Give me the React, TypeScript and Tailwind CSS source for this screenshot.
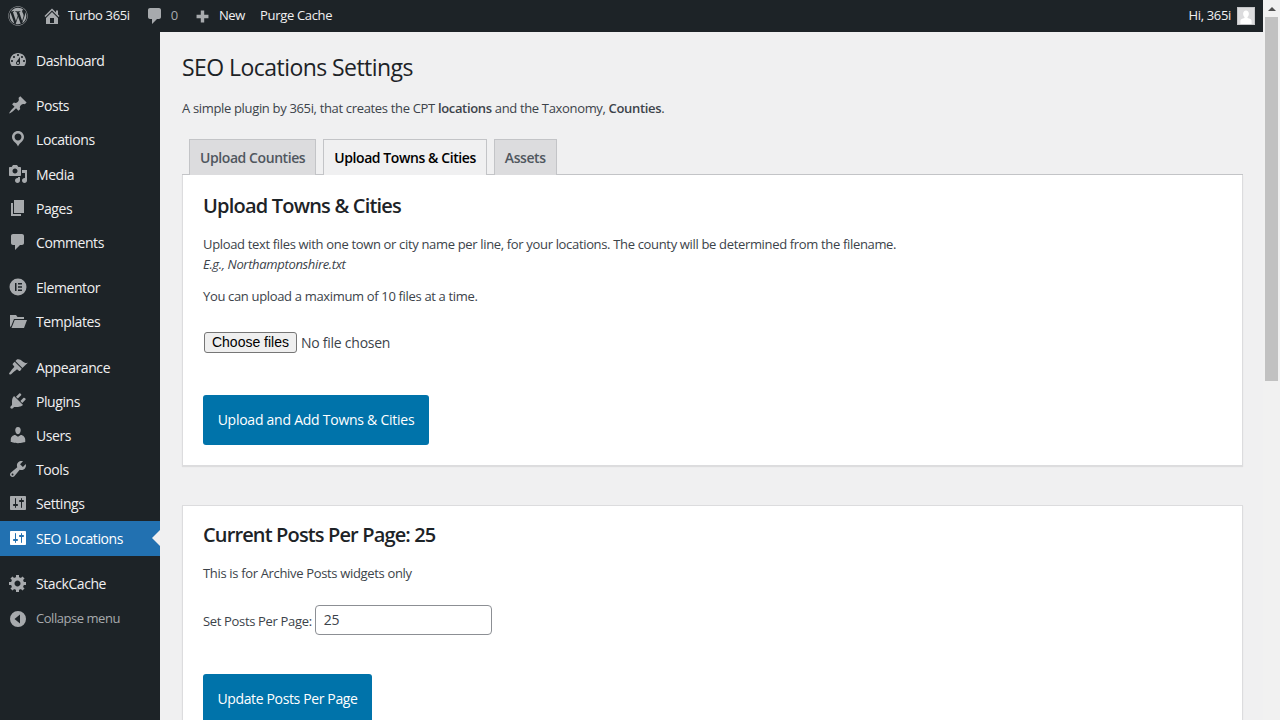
import React from "react";
import { FaWordpress } from "react-icons/fa";

const P: Record<string, string> = {
  home: "M16 8.5l1.53 1.53-1.06 1.06L10 4.62l-6.47 6.47-1.06-1.06L10 2.5l4 4v-2h2v4zm-6-2.46l6 5.99V18H4v-5.97zM12 17v-5H8v5h4z",
  comment: "M5 2h9c1.1 0 2 .9 2 2v7c0 1.1-.9 2-2 2h-2l-5 5v-5H5c-1.1 0-2-.9-2-2V4c0-1.1.9-2 2-2z",
  plus: "M17 8v4h-5v5H8v-5H3V8h5V3h4v5h5z",
  dashboard: "M3.76 16h12.48c1.1-1.37 1.76-3.11 1.76-5 0-4.42-3.58-8-8-8s-8 3.58-8 8c0 1.89.66 3.63 1.76 5zM10 4c.55 0 1 .45 1 1s-.45 1-1 1-1-.45-1-1 .45-1 1-1zM6 6c.55 0 1 .45 1 1s-.45 1-1 1-1-.45-1-1 .45-1 1-1zm8 0c.55 0 1 .45 1 1s-.45 1-1 1-1-.45-1-1 .45-1 1-1zm-5.37 5.55L12 7v6c0 1.1-.9 2-2 2s-2-.9-2-2c0-.57.24-1.08.63-1.45zM4 10c.55 0 1 .45 1 1s-.45 1-1 1-1-.45-1-1 .45-1 1-1zm12 0c.55 0 1 .45 1 1s-.45 1-1 1-1-.45-1-1 .45-1 1-1zm-5 3c0-.55-.45-1-1-1s-1 .45-1 1 .45 1 1 1 1-.45 1-1z",
  pin: "M10.44 3.02l1.82-1.82 6.36 6.35-1.83 1.82c-1.05-.68-2.48-.57-3.41.36l-.75.75c-.92.93-1.04 2.35-.35 3.41l-1.83 1.82-2.41-2.41-2.8 2.79c-.42.42-3.38 2.71-3.8 2.29s1.86-3.39 2.28-3.81l2.79-2.79L4.1 9.36l1.83-1.82c1.05.69 2.48.57 3.41-.36l.75-.75c.93-.92 1.05-2.35.35-3.41z",
  location: "M10 2C6.69 2 4 4.69 4 8c0 2.02 1.17 3.71 2.53 4.89.43.37 1.18.96 1.85 1.83.74.97 1.41 2.01 1.62 2.71.21-.7.88-1.74 1.62-2.71.67-.87 1.42-1.46 1.85-1.83C14.83 11.71 16 10.02 16 8c0-3.31-2.69-6-6-6zm0 2.56c1.9 0 3.44 1.54 3.44 3.44S11.9 11.44 10 11.44 6.56 9.9 6.56 8 8.1 4.56 10 4.56z",
  media: "M13 11V4c0-.55-.45-1-1-1h-1.67L9 1H5L3.67 3H2c-.55 0-1 .45-1 1v7c0 .55.45 1 1 1h10c.55 0 1-.45 1-1zM7 4.5c1.38 0 2.5 1.12 2.5 2.5S8.38 9.5 7 9.5 4.5 8.38 4.5 7 5.62 4.5 7 4.5zM14 6h5v10.5c0 1.38-1.12 2.5-2.5 2.5S14 17.88 14 16.5s1.12-2.5 2.5-2.5c.17 0 .34.02.5.05V9h-3V6zm-4 8.05V13h2v3.5c0 1.38-1.12 2.5-2.5 2.5S7 17.88 7 16.5 8.12 14 9.5 14c.17 0 .34.02.5.05z",
  pages: "M6 15V2h10v13H6zm-1 1h8v2H3V5h2v11z",
  elementor: "M10 1.5a8.5 8.5 0 1 0 0 17 8.5 8.5 0 0 0 0-17zM7 6h1.5v8H7V6zm3 0h4v1.5h-4V6zm0 3.25h4v1.5h-4v-1.5zM10 12.5h4V14h-4v-1.5z",
  folder: "M2 16V4h6l1.5 2H16v2H6L3.2 15 2 16zm1.5 1L6.7 9H19l-3 8H3.5z",
  brush: "M14.48 11.06L7.41 3.99l1.5-1.5c.5-.56 2.3-.47 3.51.32 1.21.8 1.43 1.28 2.91 2.1 1.18.64 2.45 1.26 4.45.85zm-.71.71L6.7 4.7 4.93 6.47c-.39.39-.39 1.02 0 1.41l1.06 1.06c.39.39.39 1.03 0 1.42-.6.6-2.5 3-3.5 4.1-.8.9-1.5 1.5-1.39 2.34.05.4.4.75.8.8.84.11 1.44-.59 2.34-1.39 1.1-1 3.5-2.9 4.1-3.5.39-.39 1.03-.39 1.42 0l1.06 1.06c.39.39 1.02.39 1.41 0z",
  plug: "M13.11 4.36L9.87 7.6 8 5.73l3.24-3.24c.35-.34 1.05-.2 1.56.32.52.51.66 1.21.31 1.55zm-8 1.77l.91-1.12 9.01 9.01-1.19.84c-.71.71-2.63 1.16-3.82 1.16H6.14L4.9 17.26c-.59.59-1.54.59-2.12 0-.59-.58-.59-1.53 0-2.12l1.24-1.24v-3.88c0-1.13.4-3.19 1.09-3.89zm7.26 3.97l3.24-3.24c.34-.35 1.04-.21 1.55.31.52.51.66 1.21.31 1.55l-3.24 3.25z",
  users: "M10 9.25c-2.27 0-2.73-3.44-2.73-3.44C7 4.02 7.82 2 9.97 2c2.16 0 2.98 2.02 2.71 3.81 0 0-.41 3.44-2.68 3.44zm0 2.57L12.72 10c2.39 0 4.52 2.33 4.52 4.53v2.49s-3.65 1.13-7.24 1.13c-3.65 0-7.24-1.13-7.24-1.13v-2.49c0-2.25 1.94-4.48 4.47-4.48z",
  tools: "M16.68 9.77c-1.34 1.34-3.3 1.67-4.95.99l-5.41 6.52c-.99.99-2.59.99-3.58 0s-.99-2.59 0-3.57l6.52-5.42c-.68-1.65-.35-3.61.99-4.95 1.28-1.28 3.12-1.62 4.72-1.06l-2.89 2.89 2.82 2.82 2.86-2.87c.53 1.58.18 3.39-1.08 4.65zM3.81 16.21c.4.39 1.04.39 1.43 0 .4-.4.4-1.04 0-1.43-.39-.4-1.03-.4-1.43 0-.39.39-.39 1.03 0 1.43z",
  settings: "M18 16V4c0-.55-.45-1-1-1H3c-.55 0-1 .45-1 1v12c0 .55.45 1 1 1h14c.55 0 1-.45 1-1zM8 11h1c.55 0 1 .45 1 1s-.45 1-1 1H8v1.5c0 .28-.22.5-.5.5s-.5-.22-.5-.5V13H6c-.55 0-1-.45-1-1s.45-1 1-1h1V5.5c0-.28.22-.5.5-.5s.5.22.5.5V11zm5-2h-1c-.55 0-1-.45-1-1s.45-1 1-1h1V5.5c0-.28.22-.5.5-.5s.5.22.5.5V7h1c.55 0 1 .45 1 1s-.45 1-1 1h-1v5.5c0 .28-.22.5-.5.5s-.5-.22-.5-.5V9z",
  gear: "M18 12h-2.18c-.17.7-.44 1.35-.81 1.93l1.54 1.54-2.1 2.1-1.54-1.54c-.58.36-1.23.63-1.91.79V19H8v-2.18c-.68-.16-1.33-.43-1.91-.79l-1.54 1.54-2.12-2.12 1.54-1.54c-.36-.58-.63-1.23-.79-1.91H1V9.03h2.17c.16-.7.44-1.35.8-1.94L2.43 5.55l2.1-2.1 1.54 1.54c.58-.37 1.24-.64 1.93-.81V2h3v2.18c.68.16 1.33.43 1.91.79l1.54-1.54 2.12 2.12-1.54 1.54c.36.59.64 1.24.8 1.94H18V12zm-8.5 1.5c1.66 0 3-1.34 3-3s-1.34-3-3-3-3 1.34-3 3 1.34 3 3 3z",
  collapse: "M10 2a8 8 0 1 0 0 16 8 8 0 0 0 0-16zm2 12.5L6.5 10 12 5.5v9z",
  avatar: "M10 3c2.2 0 3.6 1.8 3.6 4.2 0 1.9-.8 3.4-1.7 4.2v1.2c2.6.6 5.1 1.8 5.1 3.4v4H3v-4c0-1.6 2.5-2.8 5.1-3.4v-1.2C7.2 10.6 6.4 9.1 6.4 7.2 6.4 4.8 7.8 3 10 3z",
};

function Dash({ name, className }: { name: string; className?: string }) {
  return (
    <svg viewBox="0 0 20 20" fill="currentColor" fillRule="evenodd" className={className}>
      <path d={P[name]} />
    </svg>
  );
}

type Item = { icon: string; label: string; mt?: string; active?: boolean; dim?: boolean };

const menu: Item[] = [
  { icon: "dashboard", label: "Dashboard", mt: "mt-[11px]" },
  { icon: "pin", label: "Posts", mt: "mt-[11px]" },
  { icon: "location", label: "Locations" },
  { icon: "media", label: "Media", mt: "mt-[1px]" },
  { icon: "pages", label: "Pages" },
  { icon: "comment", label: "Comments" },
  { icon: "elementor", label: "Elementor", mt: "mt-[11px]" },
  { icon: "folder", label: "Templates" },
  { icon: "brush", label: "Appearance", mt: "mt-[12px]" },
  { icon: "plug", label: "Plugins" },
  { icon: "users", label: "Users" },
  { icon: "tools", label: "Tools" },
  { icon: "settings", label: "Settings" },
  { icon: "settings", label: "SEO Locations", active: true, mt: "mt-[1px]" },
  { icon: "gear", label: "StackCache", mt: "mt-[10px]" },
  { icon: "collapse", label: "Collapse menu", dim: true, mt: "mt-[2px]" },
];

function MenuRow({ item }: { item: Item }) {
  return (
    <div
      className={`relative flex items-center ${item.mt ?? ""} ${
        item.active ? "h-[35px] pb-[1px] bg-[#2271b1] text-white" : item.dim ? "h-[34px] text-[#a7aaad]" : "h-[34px] text-[#f0f0f1]"
      }`}
    >
      <span className={`w-[36px] shrink-0 flex justify-center ${item.active ? "text-white" : "text-[#a7aaad]"}`}>
        <Dash name={item.icon} className="w-[20px] h-[20px] -ml-[1px]" />
      </span>
      <span className={item.dim ? "text-[13px] tracking-[-0.035em]" : "text-[14px] tracking-[-0.03em]"}>{item.label}</span>
      {item.active && (
        <span className="absolute right-0 top-[9px] w-0 h-0 border-y-[8px] border-y-transparent border-r-[8px] border-r-[#f0f0f1]" />
      )}
    </div>
  );
}

function Tab({ label, active }: { label: string; active?: boolean }) {
  return (
    <div
      className={`h-[36px] px-[10px] pb-[1px] flex items-center border border-[#c3c4c7] border-b-0 text-[14px] font-semibold tracking-[-0.03em] -mb-px ${
        active ? "bg-[#f0f0f1] text-[#000] relative z-10" : "bg-[#dcdcde] text-[#50575e]"
      }`}
    >
      {label}
    </div>
  );
}

export default function App() {
  return (
    <div
      className="h-[720px] w-[1280px] overflow-hidden flex text-[#3c434a] bg-[#f0f0f1] tracking-[-0.021em]"
      style={{ fontFamily: '"Open Sans", "Noto Sans", sans-serif' }}
    >
      <div className="flex-1 min-w-0 flex flex-col">
        <header className="h-[32px] shrink-0 bg-[#1d2327] flex items-center justify-between text-[#f0f0f1] text-[13px]">
          <div className="flex items-center">
            <span className="w-[34px] flex justify-center ml-[1px] text-[#a7aaad]">
              <FaWordpress className="w-[20px] h-[20px]" />
            </span>
            <span className="flex items-center ml-[7px] gap-[6px]">
              <Dash name="home" className="w-[20px] h-[20px] text-[#a7aaad]" />
              <span className="tracking-[-0.026em]">Turbo 365i</span>
            </span>
            <span className="flex items-center ml-[15px] gap-[6px] text-[#a7aaad]">
              <Dash name="comment" className="w-[20px] h-[20px]" />
              0
            </span>
            <span className="flex items-center ml-[16px] gap-[8px]">
              <Dash name="plus" className="w-[17px] h-[17px] text-[#a7aaad]" />
              New
            </span>
            <span className="ml-[15px]">Purge Cache</span>
          </div>
          <div className="flex items-center gap-[6px] pr-[8px]">
            Hi, 365i
            <span className="w-[18px] h-[18px] bg-[#dcdcde] border border-[#c3c4c7] overflow-hidden">
              <Dash name="avatar" className="w-[16px] h-[16px] text-white" />
            </span>
          </div>
        </header>
        <div className="flex-1 min-h-0 flex">
          <nav className="w-[160px] shrink-0 bg-[#1d2327]">
            {menu.map((m) => (
              <MenuRow key={m.label} item={m} />
            ))}
          </nav>
          <main className="flex-1 min-w-0 pl-[22px] pr-[20px] overflow-hidden">
            <h1 className="text-[23px] leading-[29px] text-[#1d2327] mt-[21px] font-normal tracking-[-0.024em]">SEO Locations Settings</h1>
            <p className="text-[13px] leading-[20px] mt-[16px]">
              A simple plugin by 365i, that creates the CPT <b className="font-semibold">locations</b> and the Taxonomy,{" "}
              <b className="font-semibold">Counties</b>.
            </p>
            <div className="flex pl-[7px] gap-[7px] mt-[21px] border-b border-[#c3c4c7] relative">
              <Tab label="Upload Counties" />
              <Tab label="Upload Towns & Cities" active />
              <Tab label="Assets" />
            </div>
            <section className="bg-white border border-[#dcdcde] border-t-0 shadow-[0_1px_1px_rgba(0,0,0,0.08)] px-[20px] h-[291px] pt-[1px]">
              <h2 className="text-[20px] leading-[26px] font-semibold text-[#1d2327] mt-[17px] tracking-[-0.04em]">Upload Towns &amp; Cities</h2>
              <p className="text-[13px] leading-[20px] mt-[15px]">
                Upload text files with one town or city name per line, for your locations. The county will be determined from the filename.
                <br />
                <em>E.g., Northamptonshire.txt</em>
              </p>
              <p className="text-[13px] leading-[20px] mt-[12px]">You can upload a maximum of 10 files at a time.</p>
              <div className="flex items-center mt-[25px] h-[22px] ml-[1px]">
                <span
                  className="h-[21px] w-[93px] pt-[1px] flex items-center justify-center border border-[#767676] rounded-[3px] bg-[#efefef] text-[14px] text-black tracking-normal"
                  style={{ fontFamily: '"Liberation Sans", sans-serif' }}
                >
                  Choose files
                </span>
                <span className="ml-[4px] text-[14px] tracking-[-0.018em]">No file chosen</span>
              </div>
              <div className="mt-[42px] w-[226px] h-[50px] pb-[1px] bg-[#0073aa] text-white rounded-[3px] flex items-center justify-center text-[14px] tracking-[-0.018em]">
                Upload and Add Towns &amp; Cities
              </div>
            </section>
            <section className="bg-white border border-[#dcdcde] shadow-[0_1px_1px_rgba(0,0,0,0.08)] px-[20px] mt-[39px] h-[300px] pt-[1px]">
              <h2 className="text-[20px] leading-[26px] font-semibold text-[#1d2327] mt-[15px] tracking-[-0.043em]">Current Posts Per Page: 25</h2>
              <p className="text-[13px] leading-[20px] mt-[15px]">This is for Archive Posts widgets only</p>
              <div className="flex items-center mt-[22px]">
                <span className="text-[13px] pt-[4px]">Set Posts Per Page:</span>
                <div className="ml-[3px] w-[177px] h-[30px] border border-[#8c8f94] rounded-[4px] bg-white flex items-center pl-[8px] text-[14px] pb-[1px]">
                  25
                </div>
              </div>
              <div className="mt-[39px] w-[169px] h-[50px] pb-[1px] bg-[#0073aa] text-white rounded-[3px] flex items-center justify-center text-[14px] tracking-[-0.026em]">
                Update Posts Per Page
              </div>
            </section>
          </main>
        </div>
      </div>
      <aside className="w-[17px] shrink-0 bg-[#f1f1f1] flex flex-col px-[2px]">
        <div className="h-[17px] flex items-center justify-center shrink-0">
          <span className="w-0 h-0 border-x-[4px] border-x-transparent border-b-[4px] border-b-[#505050]" />
        </div>
        <div className="h-[364px] w-full bg-[#c1c1c1]" />
      </aside>
    </div>
  );
}
